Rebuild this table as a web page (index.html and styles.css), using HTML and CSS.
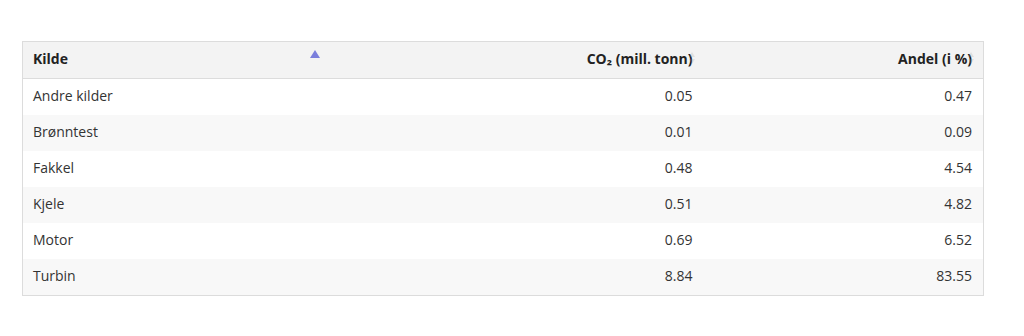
FILE: index.html
```html
<!DOCTYPE html>
<html lang="no">
<head>
  <meta charset="UTF-8">
  <title>Utslipp etter kilde</title>
  <link rel="stylesheet" href="styles.css">
</head>
<body>
  <div class="wrap">
    <table class="data-table">
      <colgroup>
        <col class="col-kilde">
        <col class="col-co2">
        <col class="col-andel">
      </colgroup>
      <thead>
        <tr>
          <th class="sortable sorted-asc">Kilde<span class="sort-icon"></span></th>
          <th class="sortable num">CO₂ (mill. tonn)<span class="sort-icon"></span></th>
          <th class="sortable num">Andel (i %)<span class="sort-icon"></span></th>
        </tr>
      </thead>
      <tbody>
        <tr><td>Andre kilder</td><td class="num">0.05</td><td class="num">0.47</td></tr>
        <tr><td>Brønntest</td><td class="num">0.01</td><td class="num">0.09</td></tr>
        <tr><td>Fakkel</td><td class="num">0.48</td><td class="num">4.54</td></tr>
        <tr><td>Kjele</td><td class="num">0.51</td><td class="num">4.82</td></tr>
        <tr><td>Motor</td><td class="num">0.69</td><td class="num">6.52</td></tr>
        <tr><td>Turbin</td><td class="num">8.84</td><td class="num">83.55</td></tr>
      </tbody>
    </table>
  </div>
</body>
</html>
```

FILE: styles.css
```css
/* Base */
* {
  margin: 0;
  padding: 0;
  box-sizing: border-box;
}

body {
  background: #fff;
  font-family: "Open Sans", "Liberation Sans", sans-serif;
  font-size: 14px;
  color: #333;
}

.wrap {
  padding: 41px 41px 0 22px;
}

/* Table */
.data-table {
  width: 961px;
  border-collapse: collapse;
  border: 1px solid #dcdcdc;
  table-layout: fixed;
}
.col-kilde { width: 307px; }
.col-co2 { width: 374px; }
.col-andel { width: 280px; }

.data-table th,
.data-table td {
  padding: 0 10px;
  text-align: left;
  white-space: nowrap;
}
.data-table th {
  height: 37px;
  padding-bottom: 3px;
  background: #f3f3f3;
  font-weight: 700;
  color: #222;
  border-bottom: 1px solid #dcdcdc;
  position: relative;
}
.data-table td {
  height: 36px;
  padding-bottom: 2px;
}
.data-table tbody tr:last-child td {
  height: 37px;
}
.data-table tbody tr:nth-child(even) td {
  background: #f8f8f8;
}
.data-table .num {
  text-align: right;
  padding-right: 11px;
}

/* Sort indicators */
.sort-icon {
  position: absolute;
  right: 9px;
  top: 50%;
  width: 6px;
  height: 12px;
  margin-top: -8px;
  opacity: 0.2;
}
.sort-icon::before,
.sort-icon::after {
  content: "";
  position: absolute;
  left: 0;
  border-left: 3px solid transparent;
  border-right: 3px solid transparent;
}
.sort-icon::before {
  top: 0;
  border-bottom: 5px solid #999;
}
.sort-icon::after {
  bottom: 0;
  border-top: 5px solid #999;
}

.sorted-asc .sort-icon {
  opacity: 1;
  width: 10px;
  right: 10px;
  margin-top: -10px;
}
.sorted-asc .sort-icon::before {
  border-left-width: 5px;
  border-right-width: 5px;
  border-bottom: 8px solid #7b7fdc;
}
.sorted-asc .sort-icon::after {
  display: none;
}
```
